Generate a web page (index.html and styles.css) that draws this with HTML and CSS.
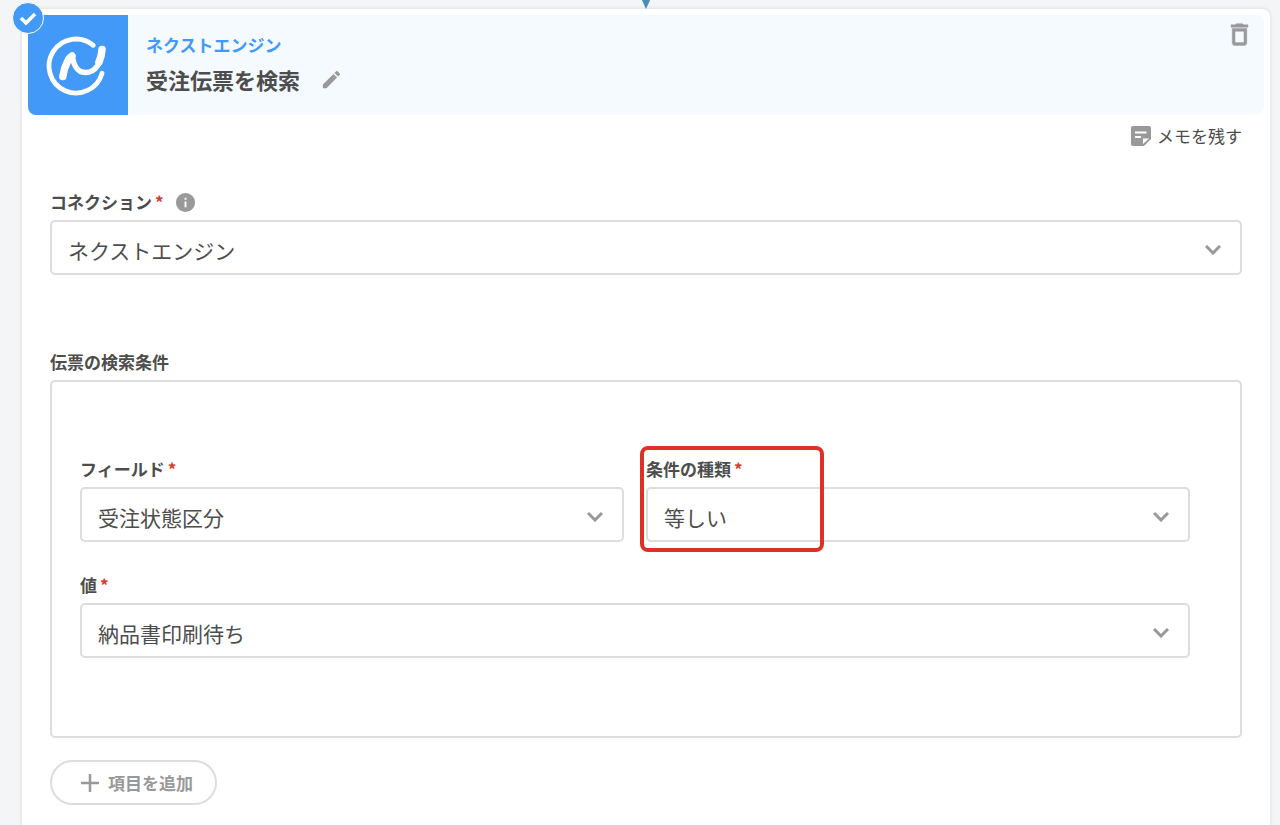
FILE: index.html
```html
<!DOCTYPE html>
<html lang="ja">
<head>
    <meta charset="UTF-8">
    <meta name="viewport" content="width=device-width, initial-scale=1.0">
    <title>受注伝票を検索</title>
    <link rel="stylesheet" href="styles.css">
</head>
<body>

    <div class="connector">
        <svg width="10" height="9" viewBox="0 0 10 9"><path d="M0 -2h10L5 9z" fill="#4790b5"/></svg>
    </div>

    <main class="card">
        <span class="badge">
            <svg width="30" height="30" viewBox="0 0 30 30"><path class="line" d="M8 15l5 5 9-9" stroke="#fff" stroke-width="3.500"/></svg>
        </span>

        <header class="card-header">
            <div class="app-logo">
                <svg width="100" height="100" viewBox="0 0 100 100" stroke="#fff" stroke-linecap="round" stroke-linejoin="round">
                    <path class="line" d="M65.300 30.300A27 27 0 1 0 74 58.300" stroke-width="4.800"/>
                    <path class="line" d="M35 61.500C36 53 39 44 44 40.500C45.500 48 48 57.500 57.500 57.500C68 57.500 73.500 47 74 35" stroke-width="5.500"/>
                    <path class="line" d="M34.800 61.500Q36 53 39.500 46.500Q41.500 42.500 44 41M74 34.500Q73.500 42 71 47" stroke-width="7.500"/>
                </svg>
            </div>
            <div class="titles">
                <a href="#" class="app-name">ネクストエンジン</a>
                <div class="title-row">
                    <h1>受注伝票を検索</h1>
                    <button type="button" class="icon-button" aria-label="名前を編集">
                        <svg width="23" height="23" viewBox="0 0 24 24"><path d="M3 17.250V21h3.750L17.810 9.940l-3.750-3.750L3 17.250zM20.710 7.040a1 1 0 0 0 0-1.410l-2.340-2.340a1 1 0 0 0-1.410 0l-1.830 1.830 3.750 3.750 1.830-1.830z"/></svg>
                    </button>
                </div>
            </div>
            <button type="button" class="icon-button delete" aria-label="削除">
                <svg width="29" height="29" viewBox="0 0 24 24"><path d="M6 19c0 1.100.9 2 2 2h8c1.100 0 2-.9 2-2V7H6v12zM8.300 9.300h7.400v9.400H8.300V9.300zm7.200-5.300l-1-1h-5l-1 1H5v2h14V4z" stroke="#999" stroke-width=".4"/></svg>
            </button>
        </header>

        <div class="card-body">
            <button type="button" class="memo">
                <svg width="20" height="20" viewBox="0 0 20 20">
                    <path d="M2 0h16a2 2 0 0 1 2 2v11l-7 7H2a2 2 0 0 1-2-2V2a2 2 0 0 1 2-2z"/>
                    <path d="M4 5.500h11.500v2H4zM4 10h6v2H4zM12 18v-5.500H18z" fill="#fff"/>
                </svg>
                メモを残す
            </button>

            <div class="field">
                <div class="label-row">
                    <label for="connection">コネクション<span class="required">*</span></label>
                    <svg width="23" height="23" viewBox="0 0 24 24"><path d="M12 2a10 10 0 1 0 0 20 10 10 0 0 0 0-20zm1 15h-2v-6h2v6zm0-8h-2V7h2v2z"/></svg>
                </div>
                <div class="select">
                    <select id="connection"><option>ネクストエンジン</option></select>
                    <svg width="16" height="10" viewBox="0 0 16 10"><path d="M1 1l7 7 7-7"/></svg>
                </div>
            </div>

            <fieldset class="conditions">
                <legend>伝票の検索条件</legend>
                <div class="condition-box">
                    <div class="field">
                        <div class="label-row">
                            <label for="target">フィールド<span class="required">*</span></label>
                        </div>
                        <div class="select">
                            <select id="target"><option>受注状態区分</option></select>
                            <svg width="16" height="10" viewBox="0 0 16 10"><path d="M1 1l7 7 7-7"/></svg>
                        </div>
                    </div>
                    <div class="field highlighted">
                        <div class="label-row">
                            <label for="operator">条件の種類<span class="required">*</span></label>
                        </div>
                        <div class="select">
                            <select id="operator"><option>等しい</option></select>
                            <svg width="16" height="10" viewBox="0 0 16 10"><path d="M1 1l7 7 7-7"/></svg>
                        </div>
                    </div>
                    <div class="field wide">
                        <div class="label-row">
                            <label for="value">値<span class="required">*</span></label>
                        </div>
                        <div class="select">
                            <select id="value"><option>納品書印刷待ち</option></select>
                            <svg width="16" height="10" viewBox="0 0 16 10"><path d="M1 1l7 7 7-7"/></svg>
                        </div>
                    </div>
                </div>
            </fieldset>

            <button type="button" class="add">
                <svg width="18" height="18" viewBox="0 0 18 18"><path d="M9 0v18M0 9h18" stroke="#999" stroke-width="2.500"/></svg>
                項目を追加
            </button>
        </div>
    </main>

</body>
</html>
```

FILE: styles.css
```css
* {
    box-sizing: border-box;
}
body {
    display: flex;
    flex-direction: column;
    min-height: 100vh;
    margin: 0;
    padding: 0 10px 0 22px;
    background-color: #f4f5f7;
    color: #4d4d4d;
    font-family: "Noto Sans CJK JP", sans-serif;
    font-size: 17px;
    line-height: 24px;
}
svg {
    display: block;
    flex-shrink: 0;
    fill: #999;
}
.line {
    fill: none;
}
button {
    font: inherit;
    color: inherit;
    background: none;
    border: 0;
    padding: 0;
    cursor: pointer;
}
.connector {
    display: flex;
    justify-content: center;
    height: 9px;
}
.card {
    position: relative;
    flex: 1;
    padding: 6px 6px 20px;
    background-color: #fff;
    border-radius: 8px 8px 0 0;
    box-shadow: 0 0 4px rgba(0, 0, 0, 0.12);
}
.badge {
    position: absolute;
    top: -7px;
    left: -10px;
    border: 1px solid #fff;
    border-radius: 50%;
    background-color: #4299f7;
}

/* header */
.card-header {
    display: flex;
    align-items: flex-start;
    background-color: #f4faff;
    border-radius: 8px;
    overflow: hidden;
}
.app-logo {
    background-color: #4299f7;
}
.titles {
    flex: 1;
    padding: 18px 0 0 18px;
}
.app-name {
    display: block;
    color: #4299f7;
    font-weight: bold;
    text-decoration: none;
}
.title-row {
    display: flex;
    align-items: center;
    gap: 20px;
    margin-top: 6px;
}
h1 {
    margin: 0;
    font-size: 22px;
    line-height: 32px;
}
.delete {
    margin: 5px 10px 0 0;
}

/* form */
.card-body {
    display: flex;
    flex-direction: column;
    padding: 9px 22px 0;
}
.memo {
    display: flex;
    align-items: center;
    align-self: flex-end;
    gap: 6px;
    margin-bottom: 42px;
}
.label-row {
    display: flex;
    align-items: center;
    gap: 10px;
    height: 24px;
    margin-bottom: 6px;
}
label,
legend {
    font-weight: bold;
}
.required {
    margin-left: 3px;
    color: #d93a2b;
}
.select {
    position: relative;
}
.select select {
    display: block;
    width: 100%;
    height: 55px;
    padding: 4px 48px 0 16px;
    appearance: none;
    background-color: #fff;
    border: 2px solid #ddd;
    border-radius: 5px;
    color: #4d4d4d;
    font: inherit;
    font-size: 21px;
}
.select svg {
    position: absolute;
    top: 25px;
    right: 21px;
    fill: none;
    stroke: #999;
    stroke-width: 3;
    pointer-events: none;
}
.conditions {
    min-width: 0;
    margin: 75px 0 0;
    padding: 0;
    border: 0;
}
legend {
    margin-bottom: 6px;
    padding: 0;
}
.condition-box {
    display: grid;
    grid-template-columns: 1fr 1fr;
    gap: 31px 22px;
    padding: 75px 50px 78px 28px;
    border: 2px solid #ddd;
    border-radius: 5px;
}
.wide {
    grid-column: 1 / -1;
}
.highlighted {
    position: relative;
}
.highlighted::after {
    content: "";
    position: absolute;
    top: -11px;
    left: -6px;
    box-sizing: border-box;
    width: 184px;
    height: 106px;
    border: 4px solid #df3028;
    border-radius: 8px;
    pointer-events: none;
}
.add {
    display: flex;
    align-items: center;
    align-self: flex-start;
    gap: 9px;
    height: 45px;
    margin-top: 22px;
    padding: 0 22px 0 29px;
    border: 2px solid #ddd;
    border-radius: 23px;
    color: #999;
    font-weight: bold;
}
```
